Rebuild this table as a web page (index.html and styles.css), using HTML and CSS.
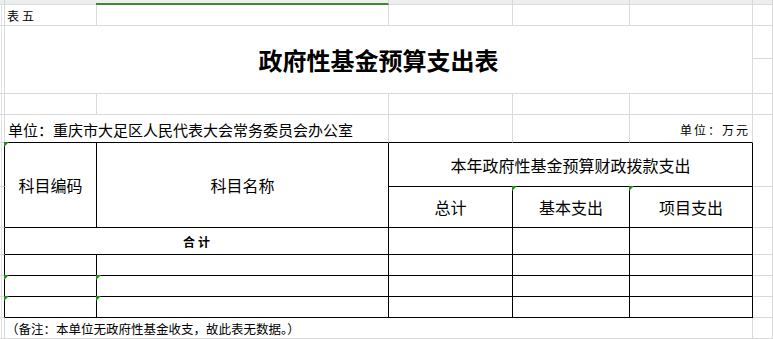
FILE: index.html
```html
<!DOCTYPE html>
<html lang="zh-CN">
<head>
<meta charset="utf-8">
<title>政府性基金预算支出表</title>
<link rel="stylesheet" href="styles.css">
</head>
<body>
<div class="sheet">
  <!-- r1: strip -->
  <div class="cell strip"></div>
  <div class="cell strip"></div>
  <div class="cell strip sel"></div>
  <div class="cell strip"></div>
  <div class="cell strip"></div>
  <div class="cell strip"></div>
  <div class="cell strip"></div>
  <!-- r2 -->
  <div class="cell hdr"></div>
  <div class="cell small left">表五</div>
  <div class="cell"></div>
  <div class="cell"></div>
  <div class="cell"></div>
  <div class="cell"></div>
  <div class="cell"></div>
  <!-- r3-r4 title -->
  <div class="cell hdr r2"></div>
  <div class="cell c5 r2 title">政府性基金预算支出表</div>
  <div class="cell"></div>
  <div class="cell"></div>
  <!-- r5 -->
  <div class="cell hdr"></div>
  <div class="cell"></div>
  <div class="cell"></div>
  <div class="cell"></div>
  <div class="cell"></div>
  <div class="cell"></div>
  <div class="cell"></div>
  <!-- r6 unit row -->
  <div class="cell hdr"></div>
  <div class="cell c2 tb unit">单位：重庆市大足区人民代表大会常务委员会办公室</div>
  <div class="cell tb"></div>
  <div class="cell tb"></div>
  <div class="cell tb small right">单位：万元</div>
  <div class="cell r2"></div>
  <!-- r7 header -->
  <div class="cell hdr lb"></div>
  <div class="cell t r2 head tri">科目编码</div>
  <div class="cell t r2 head">科目名称</div>
  <div class="cell t c3 head">本年政府性基金预算财政拨款支出</div>
  <!-- r8 -->
  <div class="cell hdr lb"></div>
  <div class="cell t head">总计</div>
  <div class="cell t head tri">基本支出</div>
  <div class="cell t head tri">项目支出</div>
  <div class="cell"></div>
  <!-- r9 total -->
  <div class="cell hdr lb"></div>
  <div class="cell t c2 small bold">合计</div>
  <div class="cell t"></div>
  <div class="cell t"></div>
  <div class="cell t"></div>
  <div class="cell"></div>
  <!-- r10 -->
  <div class="cell hdr lb"></div>
  <div class="cell t"></div>
  <div class="cell t"></div>
  <div class="cell t"></div>
  <div class="cell t"></div>
  <div class="cell t"></div>
  <div class="cell"></div>
  <!-- r11 -->
  <div class="cell hdr lb"></div>
  <div class="cell t tri"></div>
  <div class="cell t tri"></div>
  <div class="cell t"></div>
  <div class="cell t"></div>
  <div class="cell t"></div>
  <div class="cell"></div>
  <!-- r12 -->
  <div class="cell hdr lb"></div>
  <div class="cell t tri"></div>
  <div class="cell t tri"></div>
  <div class="cell t"></div>
  <div class="cell t"></div>
  <div class="cell t"></div>
  <div class="cell"></div>
  <!-- r13 footer -->
  <div class="cell hdr"></div>
  <div class="cell c5 note">（备注：本单位无政府性基金收支，故此表无数据。）</div>
  <div class="cell"></div>
</div>
</body>
</html>
```
FILE: styles.css
```css
html, body {
  margin: 0;
  padding: 0;
  background: #fff;
  overflow: hidden;
}

.sheet {
  display: grid;
  grid-template-columns: 5px 92px 292px 124px 117px 123px 20px;
  grid-template-rows: 5px 21px 33px 35px 21px 28px 44px 41px 27px 21px 21px 21px 21px;
  width: 773px;
  height: 339px;
  font-family: "Noto Sans CJK SC", "Noto Sans", sans-serif;
  color: #000;
}

.cell {
  box-sizing: border-box;
  border-right: 1px solid #dadada;
  border-bottom: 1px solid #dadada;
  display: flex;
  align-items: center;
  justify-content: center;
  white-space: nowrap;
  overflow: visible;
  position: relative;
  min-width: 0;
}

.c2 { grid-column: span 2; }
.c3 { grid-column: span 3; }
.c5 { grid-column: span 5; }
.r2 { grid-row: span 2; }

.strip {
  background: #eeeeee;
  border-right-color: #d6d6d6;
  border-bottom-color: #dcdcdc;
}

.sel {
  border-bottom: 2px solid #3d8c2c;
  margin-left: -1px;
}

.hdr {
  background: linear-gradient(to right, transparent 1px, #e2e2e2 1px, #e2e2e2 2px, transparent 2px);
}

.lb { border-right-color: #000; }
.tb { border-bottom-color: #000; }
.t {
  border-right-color: #000;
  border-bottom-color: #000;
}

.small {
  font-size: 12px;
  letter-spacing: 3px;
}

.left {
  justify-content: flex-start;
  padding-left: 2px;
}

.right {
  justify-content: flex-end;
  padding-right: 2px;
  padding-top: 2px;
  letter-spacing: 2px;
}

.bold { font-weight: 700; padding-left: 3px; }

.title {
  font-size: 24px;
  font-weight: 700;
}

.unit {
  justify-content: flex-start;
  padding-left: 3px;
  padding-top: 2px;
  font-size: 15px;
}

.head {
  font-size: 16px;
}

.note {
  justify-content: flex-start;
  font-size: 12.5px;
  padding-left: 1px;
  padding-top: 1px;
}

.tri::before {
  content: "";
  position: absolute;
  top: -1px;
  left: -1px;
  width: 0;
  height: 0;
  border-top: 5px solid #1f8f1f;
  border-right: 5px solid transparent;
}
```
